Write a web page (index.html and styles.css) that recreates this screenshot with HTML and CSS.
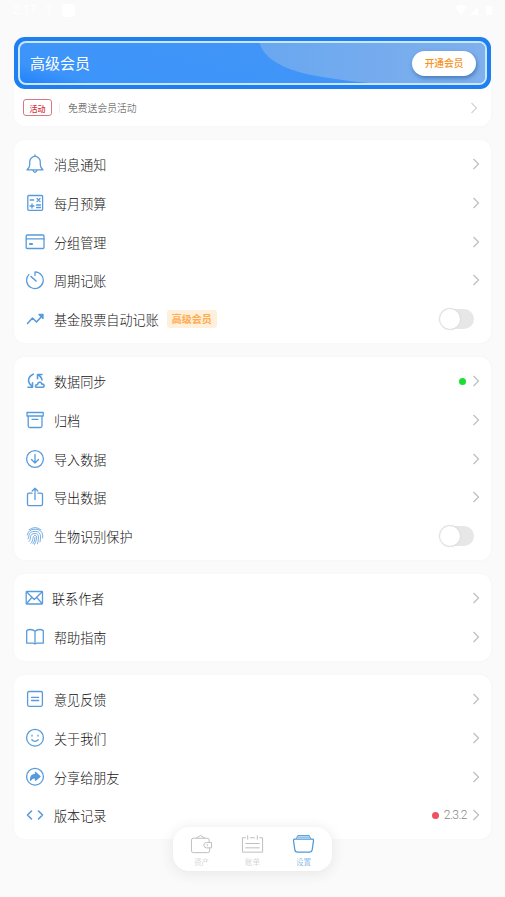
FILE: index.html
```html
<!DOCTYPE html>
<html lang="zh-CN">
<head>
<meta charset="utf-8">
<title>设置</title>
<link rel="stylesheet" href="styles.css">
</head>
<body>
<svg class="defs" width="0" height="0"><symbol id="go" viewBox="0 0 8 12"><path d="M1.500 1 6.500 6 1.500 11"/></symbol></svg>
<header class="status">
  <div class="status-side"><span>2:17</span><svg width="8" height="12" viewBox="0 0 8 12"><path d="M4 1v10M1 4l3-3 3 3"/></svg><i class="block"></i></div>
  <div class="status-side"><svg width="40" height="12" viewBox="0 0 40 12"><path class="solid" d="M0 3q6-5 12 0l-6 8zM15 11l8-8v8zM31 2h6v9h-6z"/></svg></div>
</header>
<main>
  <section class="vip-card">
    <div class="banner">
      <svg class="wave" viewBox="0 0 466 41" preserveAspectRatio="none"><defs><linearGradient id="wg"><stop offset="0" stop-color="#69a7f0"/><stop offset="1" stop-color="#80b0ed"/></linearGradient></defs><path fill="url(#wg)" d="M240 0C245 15 259 24 284 31Q309 37 350 41H466V0z"/></svg>
      <span class="vip-title">高级会员</span>
      <span class="vip-button">开通会员</span>
    </div>
    <div class="promo"><span class="promo-tag">活动</span><i class="divider"></i><span class="promo-text">免费送会员活动</span><svg class="go pale"><use href="#go"/></svg></div>
  </section>

  <section class="card">
    <div class="row"><svg class="icon" viewBox="0 0 20 20"><path d="M2 15.800h16q-2.700-2-2.700-5V8.200q0-4.500-5.300-6-5.300 1.500-5.300 6v2.600q0 3-2.700 5zM10 .8v1.400M7.800 16q2.200 4.500 4.400 0"/></svg><span class="label">消息通知</span><svg class="go"><use href="#go"/></svg></div>
    <div class="row"><svg class="icon" viewBox="0 0 20 20"><rect x="2.800" y="2.500" width="14.800" height="14.800" rx="1"/><path d="M5.200 7h3.500M12 5.500l3 3M15 5.500l-3 3M5 13h4M7 11v4M11.500 12h4M11.500 14.500h4"/></svg><span class="label">每月预算</span><svg class="go"><use href="#go"/></svg></div>
    <div class="row"><svg class="icon" viewBox="0 0 20 20"><rect x="1.200" y="3" width="17.800" height="13.500" rx="1"/><path d="M1.200 6.800h17.800"/><path class="bold" d="M5 12h2"/></svg><span class="label">分组管理</span><svg class="go"><use href="#go"/></svg></div>
    <div class="row"><svg class="icon" viewBox="0 0 20 20"><path d="M10 5.500V1.900a8.300 8.300 0 1 1-6.200 2.700"/><path class="mid" d="M6 6.500l5 4.500"/></svg><span class="label">周期记账</span><svg class="go"><use href="#go"/></svg></div>
    <div class="row"><svg class="icon" viewBox="0 0 20 20"><path class="mid" d="M2.500 14.500 7.500 9l4 4L17.500 6.500"/><path class="fill" d="M14 5.500h4v4z"/></svg><span class="label">基金股票自动记账</span><span class="vip-tag">高级会员</span><i class="switch"></i></div>
  </section>

  <section class="card">
    <div class="row"><svg class="icon sync" viewBox="0 0 20 20"><path class="mid" d="M7.200 3.200C1 6 1.500 12 6 15M2 16.200h4.500v-4.500M16 3.500h-4.500v4.300M11.500 3.500q4 2 4.500 5.500M10.500 16.200h6.500c2-.5 1-3.500-1-3-1-3-4-2.500-4.500.3-2.500 0-2.500 2.500-1 2.700z"/></svg><span class="label">数据同步</span><i class="dot green"></i><svg class="go"><use href="#go"/></svg></div>
    <div class="row"><svg class="icon" viewBox="0 0 20 20"><path d="M2 2.500h16.200v3.500H2zM3.200 6v10q0 1.500 1.500 1.500h10.800q1.500 0 1.500-1.500V6M7 9.300h6"/></svg><span class="label">归档</span><svg class="go"><use href="#go"/></svg></div>
    <div class="row"><svg class="icon" viewBox="0 0 20 20"><circle cx="10" cy="10" r="8.400"/><path d="M10 5.500v8.500M6.500 10.500 10 14l3.500-3.500"/></svg><span class="label">导入数据</span><svg class="go"><use href="#go"/></svg></div>
    <div class="row"><svg class="icon" viewBox="0 0 20 20"><path d="M7 6.200H4Q2.500 6.200 2.500 7.700v9.300q0 1.700 1.500 1.700h12q1.500 0 1.500-1.700V7.700q0-1.500-1.500-1.500h-3M10 12.500V1.200M7.200 4 10 1.200 12.800 4"/></svg><span class="label">导出数据</span><svg class="go"><use href="#go"/></svg></div>
    <div class="row"><svg class="icon" viewBox="0 0 20 20"><path class="fine" d="M4 3.800q6-4.600 12 0M2.300 9q1-5.800 7.700-5.800T17.700 9v3M3 13c2-2-1-7.600 7-7.600 6.300 0 6 5 5 10.500M4 15.500C7 13 3.500 7.500 10 7.500c5 0 3.500 6 2.500 10.300M6 17.300c3-3 1-7.800 4-7.800s1.500 5-.5 8.900M10 11.500q0 4-2 6.200"/></svg><span class="label">生物识别保护</span><i class="switch"></i></div>
  </section>

  <section class="card">
    <div class="row"><svg class="icon mail" viewBox="0 0 20 20"><rect x="2.200" y="3.500" width="16.300" height="12.500" rx=".8"/><path d="M2.700 4 10.300 11.500 18 4M2.700 15.500 7.800 9.500M18 15.500l-5.200-6"/></svg><span class="label">联系作者</span><svg class="go"><use href="#go"/></svg></div>
    <div class="row"><svg class="icon" viewBox="0 0 20 20"><path d="M10 4.300Q8 2.500 5.500 2.500T1.700 3.800V16.200h6.800L10 17l1.500-.8h6.800V3.800Q17 2.500 14.500 2.500T10 4.300V16.500"/></svg><span class="label">帮助指南</span><svg class="go"><use href="#go"/></svg></div>
  </section>

  <section class="card">
    <div class="row"><svg class="icon" viewBox="0 0 20 20"><rect x="2.600" y="2.500" width="14.800" height="14.800" rx="1.500"/><path d="M6.500 8.300h7.200M6.500 11.500h7.200"/></svg><span class="label">意见反馈</span><svg class="go"><use href="#go"/></svg></div>
    <div class="row"><svg class="icon" viewBox="0 0 20 20"><circle cx="10" cy="9.700" r="8.400"/><path d="M6.800 11.800q3.200 3.200 6.400 0M7 7.200v.8M13 7.200v.8"/></svg><span class="label">关于我们</span><svg class="go"><use href="#go"/></svg></div>
    <div class="row"><svg class="icon" viewBox="0 0 20 20"><circle cx="10" cy="9.700" r="8.400"/><path class="fill" d="M10.500 5.500 15 9.500l-4.500 3.700v-2.200q-3-.5-5 2.200 0-5.700 5-5.700z"/></svg><span class="label">分享给朋友</span><svg class="go"><use href="#go"/></svg></div>
    <div class="row"><svg class="icon" viewBox="0 0 20 20"><path class="mid" d="M6.500 6 2.500 10l4 4M13.500 6l4 4-4 4"/></svg><span class="label">版本记录</span><i class="dot red"></i><span class="version">2.3.2</span><svg class="go"><use href="#go"/></svg></div>
  </section>
</main>
<nav class="tabs">
  <div class="tab"><svg viewBox="0 0 24 20"><path d="M20 8V5.500q0-1.500-2-1.500H3.500Q1.500 4 1.500 6v11q0 2 2 2h15q2 0 2-2V14M6.500 4 11 1l4.500 3M22.500 8.500H17q-2.500 0-2.500 2.700T17 14h5.500zM18 10.200v2"/></svg><span>资产</span></div>
  <div class="tab"><svg viewBox="0 0 24 20"><path d="M5 3.500H1.500v15h21v-15h-3.500M9.500 3.500h5M7 1v4.500M17 1v4.500M4.500 9.500h15M4.500 14h15"/></svg><span>账单</span></div>
  <div class="tab active"><svg viewBox="0 0 24 20"><path class="mid" d="M2.500 5h19q1 0 1 1L21 16.500q-.4 2-2.500 2h-13q-2 0-2.500-2L1.500 6q0-1 1-1z"/><path d="M4.500 4.500 6 1.200h12l1.500 3.300M5.500 2.800h13"/></svg><span>设置</span></div>
</nav>
</body>
</html>
```
FILE: styles.css
```css
* { box-sizing: border-box; }
body {
  margin: 0;
  width: 505px;
  height: 897px;
  overflow: hidden;
  background: #fafafa;
  color: #111;
  font-family: "Noto Sans CJK SC", sans-serif;
  font-weight: 300;
}
svg { fill: none; stroke: currentColor; flex: none; }
.defs { position: absolute; }
.status {
  height: 37px;
  padding: 4px 10px 0 11px;
  display: flex;
  justify-content: space-between;
  color: #fff;
}
.status-side { display: flex; height: 12px; align-items: center; gap: 8px; font: 12px/12px Roboto, sans-serif; }
.status-side:first-child { gap: 9px; padding-left: 2px; }
.block { width: 13px; height: 13px; border-radius: 3px; background: #fff; }
.solid { fill: #fff; stroke: none; }
main { padding: 0 14px; }
.vip-card { height: 89px; margin-bottom: 14px; background: #fff; border-radius: 11px; box-shadow: 0 0 3px #f4f4f4; }
.banner {
  position: relative;
  height: 52px;
  padding: 0 16px;
  display: flex;
  align-items: center;
  justify-content: space-between;
  border-radius: 11px;
  background: #1f7ff0;
}
.banner::before {
  content: "";
  position: absolute;
  inset: 4px;
  border: 2px solid #c9e8fd;
  border-radius: 8px;
  background: linear-gradient(15deg, #2282fa 0, #3c94fa 12%, #4295f8 65%, #63a3f2) padding-box;
}
.wave { position: absolute; left: 6px; top: 6px; width: 465px; height: 40px; stroke: none; border-radius: 6px; }
.vip-title { position: relative; color: #fff; font-size: 15px; line-height: 20px; font-weight: 400; }
.vip-button {
  position: relative;
  left: 1px;
  width: 64px;
  height: 25px;
  border-radius: 13px;
  background: #fff;
  box-shadow: 1px 2px 4px #4478b8;
  color: #f7931d;
  font-size: 9.7px;
  line-height: 25px;
  text-align: center;
  font-weight: 500;
}
.promo { height: 37px; padding: 0 13px 0 9px; display: flex; align-items: center; }
.promo-tag { width: 29px; height: 17px; border: 1px solid #d77980; border-radius: 3px; color: #d2323c; font-size: 8px; line-height: 17px; text-align: center; font-weight: 500; }
.divider { width: 1px; height: 10px; margin: 0 8px 0 7px; background: #eee; }
.promo-text { color: #444; font-size: 9.8px; line-height: 14px; }
.card { margin-bottom: 14px; padding: 4.7px 11px 4.7px 11px; background: #fff; border-radius: 11px; box-shadow: 0 0 3px #f4f4f4; }
.card:nth-child(2), .card:nth-child(3) { height: 203px; }
.card:nth-child(4) { height: 87px; }
.card:nth-child(5) { height: 164px; }
.row { height: 38.75px; display: flex; align-items: center; }
.icon { width: 20px; height: 20px; margin-right: 9px; color: #579bdc; stroke-width: 1.3; stroke-linecap: round; stroke-linejoin: round; }
.icon.mail { margin-left: -1px; margin-right: 8px; }
.icon.sync { margin-left: 1px; margin-right: 8px; }
.bold { stroke-width: 2.2; }
.mid { stroke-width: 1.6; }
.fine { stroke-width: .8; }
.fill { fill: currentColor; }
.label { font-size: 13.1px; line-height: 20px; padding-top: 2px; }
.go { width: 8px; height: 12px; margin-left: auto; color: #bcc1c5; stroke-width: 1.3; }
.go.pale { color: #d5d5d5; }
.vip-tag { width: 50px; height: 18px; margin-left: 8px; border-radius: 3px; background: #fff0dc; color: #ffab52; font-size: 10px; line-height: 18px; text-align: center; font-weight: 700; }
.switch { width: 34px; height: 20px; margin-left: auto; margin-right: 6px; border-radius: 11px; background: #e7e7e7; }
.switch::before { content: ""; display: block; width: 20px; height: 20px; border-radius: 50%; background: #fff; box-shadow: 0 0 1px 1px #ddd; }
.dot { width: 7px; height: 7px; border-radius: 50%; margin-left: auto; }
.dot ~ .go { margin-left: 6px; }
.green { background: #18df32; }
.red { background: #ee5262; }
.version { margin-left: 5px; color: #888; font: 12px/16px Roboto, sans-serif; font-weight: 300; letter-spacing: -.5px; }
.dot + .version + .go { margin-left: 5px; }
.tabs {
  position: absolute;
  left: 173px;
  top: 827px;
  width: 159px;
  height: 44px;
  padding: 7px 3px 0;
  display: flex;
  border-radius: 16px;
  background: #fff;
  box-shadow: 0 2px 14px #e5e5e5;
}
.tab { flex: 1; display: flex; flex-direction: column; align-items: center; color: #bcbcbc; font-size: 7.5px; line-height: 11px; gap: 2px; }
.tab svg { width: 23px; height: 20px; stroke-width: 1; }
.tab .mid { stroke-width: 1.3; }
.tab.active { color: #4d9ad8; }
```
